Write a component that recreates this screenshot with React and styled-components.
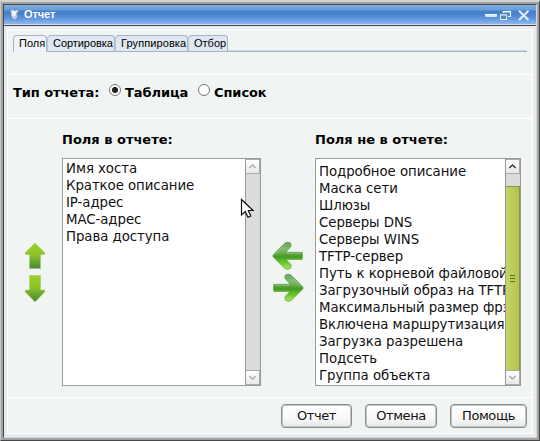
import React from "react";
import styled, { createGlobalStyle } from "styled-components";

const Global = createGlobalStyle`
  * { box-sizing: border-box; }
  body { margin: 0; overflow: hidden; background: #f0f4f3; font: 13.33px/17px "DejaVu Sans", sans-serif; color: #111; }
`;

const Frame = styled.div`
  width: 540px; height: 441px;
  border-style: solid; border-width: 2px 1px 1px;
  border-color: #d2d4d3 #484848 #484848 #c8cbca;
`;
const Bevel = styled.div`
  height: 100%;
  border: 2px solid #a0a3a2;
`;
const Inner = styled.div`
  height: 100%;
  display: flex; flex-direction: column;
  border-style: solid; border-width: 1px;
  border-color: #484848 #d8dbdc #d8dbdc #484848;
  background: #e7ebf1;
`;
const TitleBar = styled.header`
  flex: none; height: 21px; padding: 0 5px 2px;
  display: flex; align-items: center;
  border-bottom: 1px solid #484848;
  box-shadow: inset 0 -1px #d9dee6;
  background: linear-gradient(#7eafe4 0, #6a9dd9 5px, #4580ca 6px, #4882cd 9px, #6399df 14px, #8cb8f0 19px);
`;
const Title = styled.h1`
  flex: 1; margin: 1px 0 0 4px;
  font: bold 11px/17px "Liberation Sans", sans-serif; letter-spacing: -0.1px; color: #fff;
`;
const Controls = styled.div`
  display: flex; align-items: center; margin: 2px 0 0;
`;
const Panel = styled.main`
  flex: 1; margin: 3px; display: flex; flex-direction: column;
  border: 1px solid #fff; background: #f0f4f3;
`;
const TabArea = styled.section`
  flex: none; height: 45px; padding: 5px 5px 0; border-bottom: 1px solid #fff;
`;
const Tabs = styled.nav`
  display: flex; height: 17px;
  font: 11px/15px "Liberation Sans", sans-serif; color: #000;
`;
const Tab = styled.div`
  width: ${(p) => p.$width}px; padding-left: 5px; white-space: nowrap;
  border: 1px solid #a4b2ca; border-left-color: ${(p) => (p.$active ? "#a4b2ca" : "#bdc8da")};
  border-bottom: ${(p) => (p.$active ? "0" : "1px solid #a4b2ca")};
  border-radius: 4px 4px 0 0;
  background: ${(p) => (p.$active ? "#f0f4f9" : "#dfe7ef")};
  letter-spacing: ${(p) => p.$spacing || 0}px;
`;
const TabLine = styled.div`
  flex: 1; border-bottom: 1px solid #a4b2ca; box-shadow: inset 0 -1px #cfdae8;
`;
const TypeRow = styled.section`
  flex: none; height: 44px; padding: 0 5px 9px; display: flex; align-items: center;
  border-bottom: 1px solid #fff; font-size: 13px; font-weight: bold; color: #000;
`;
const TypeLabel = styled.span`width: 96px; padding-top: 1px; white-space: nowrap; letter-spacing: -0.08px;`;
const Choice = styled.label`
  width: 89px; display: flex; align-items: center; gap: 4px; letter-spacing: -0.08px;
  span { padding-top: 1px; }
`;
const Radio = styled.i`
  width: 12px; height: 12px; margin-top: -5px; flex: none; border-radius: 50%;
  border: 1px solid #777;
  background: ${(p) => (p.$checked ? "radial-gradient(circle, #222 0 2.7px, #fff 3.4px)" : "#fff")};
`;
const Fields = styled.section`
  flex: none; height: 279px; padding-top: 12px; display: grid;
  grid-template-columns: 54px 199px 54px 206px; align-items: start;
  border-bottom: 1px solid #fff;
`;
const Column = styled.div``;
const Heading = styled.h2`
  margin: 0; height: 27px; font-size: 13px; line-height: 17px; font-weight: bold; color: #000; white-space: nowrap;
`;
const ListBox = styled.div`
  display: flex; height: 228px; border: 1px solid #999;
  background: #fff;
`;
const Items = styled.ul`
  flex: 1; min-width: 0; overflow: hidden; margin: 0; padding: ${(p) => p.$top}px 0 0 3px; list-style: none;
  letter-spacing: -0.06px;
  li { height: 17px; white-space: nowrap; }
`;
const Scrollbar = styled.div`
  flex: none; width: 15px; display: flex; flex-direction: column;
  border-left: 1px solid #999; background: #dcdcdc;
`;
const ScrollButton = styled.div`
  height: 15px; display: flex; align-items: center; justify-content: center;
  border: 1px solid #aaa; border-left: 0; background: linear-gradient(#fff, #e8e8e8);
`;
const Track = styled.div`flex: 1; padding-top: 12px;`;
const Thumb = styled.div`
  height: 100%; display: flex; align-items: center; justify-content: center;
  border: 1px solid #87983a; border-width: 1px 1px 0 0;
  background: linear-gradient(90deg, #c5d468, #bccc5b 50%, #b2c34f);
`;
const Arrows = styled.div`
  padding-top: ${(p) => p.$top}px; display: flex; flex-direction: column; align-items: center; gap: ${(p) => p.$gap}px;
  svg { display: block; }
`;
const Actions = styled.footer`
  flex: 1; display: flex; justify-content: flex-end; gap: 13px; padding: 6px 5px 0 0;
`;
const Button = styled.button`
  width: ${(p) => p.$width}px; height: 24px; padding: 0;
  border: 1px solid #898c8c; border-radius: 4px;
  box-shadow: inset 0 0 0 1px #c4c6c6;
  background: linear-gradient(#fff, #fafafa 50%, #e9e9e9);
  font: 13px/20px "DejaVu Sans", sans-serif; letter-spacing: -0.4px; color: #111;
`;
const Pointer = styled.svg`position: absolute; left: 240px; top: 198px;`;

const Chevron = ({ down, color }) => (
  <svg width="9" height="7" viewBox="0 0 9 7">
    <path d={down ? "M1.3 2 4.5 5 7.7 2" : "M1.3 5 4.5 2 7.7 5"} fill="none" stroke={color} strokeWidth="1.4" />
  </svg>
);

const VerticalArrow = ({ down }) => (
  <svg width="22" height={down ? 27 : 26} viewBox="0 0 22 26" preserveAspectRatio="none">
    <defs>
      <linearGradient id={down ? "down" : "up"} x2="0" y2="1">
        <stop stopColor="#9fce24" /><stop offset=".45" stopColor="#8cc326" /><stop offset="1" stopColor="#458936" />
      </linearGradient>
    </defs>
    <path
      d={down ? "M5.5 .5H16.5V14.5H20.5L21 16 11.5 25.5H10.5L1 16 1.5 14.5H5.5Z" : "M10.5 .5H11.5L21 10 20.5 11.5H16.5V25.5H5.5V11.5H1.5L1 10Z"}
      fill={`url(#${down ? "down" : "up"})`} stroke="#9cc963" strokeWidth=".5"
    />
  </svg>
);

const SideArrow = ({ right }) => {
  const id = right ? "right" : "left";
  return (
    <svg width="32" height="30" viewBox="0 0 32 30">
      <defs>
        <linearGradient id={id} gradientUnits="userSpaceOnUse" x1="0" y1="1" x2="0" y2="28">
          <stop stopColor="#5c9f4e" /><stop offset=".25" stopColor="#83bb70" /><stop offset=".42" stopColor="#67ab4c" />
          <stop offset=".54" stopColor="#439b25" /><stop offset=".75" stopColor="#68c325" /><stop offset="1" stopColor="#a3eb55" />
        </linearGradient>
      </defs>
      <g transform={right ? "translate(32 0) scale(-1 1)" : undefined}>
        <path d="M1.4 13.6 12.6 2.3Q15.5.2 18.3 1.8 20.2 3.6 18.5 6L13.8 11.3H29.2Q30.5 11.3 30.5 12.6V17.2Q30.5 18.5 29.2 18.5H14L18.6 23.2Q20.1 25.5 18.2 27.5 15.3 29.4 12.6 27.2L1.4 16.2Q.2 14.9 1.4 13.6Z" fill={`url(#${id})`} stroke="#609f43" strokeWidth=".7" />
        <path d="M3 14 13.6 3.4Q15.5 2 17 2.8M15 12.3H29" fill="none" stroke="#b4d99f" strokeWidth=".6" opacity=".6" />
      </g>
    </svg>
  );
};

const ScrollRail = ({ active }) => (
  <Scrollbar>
    <ScrollButton><Chevron color={active ? "#333" : "#aaa"} /></ScrollButton>
    <Track>
      {active && (
        <Thumb>
          <svg width="5" height="8"><path d="M0 .5H5M0 3.5H5M0 6.5H5" stroke="#5c692b" /></svg>
        </Thumb>
      )}
    </Track>
    <ScrollButton><Chevron down color="#aaa" /></ScrollButton>
  </Scrollbar>
);

const included = ["Имя хоста", "Краткое описание", "IP-адрес", "MAC-адрес", "Права доступа"];
const excluded = [
  "Подробное описание", "Маска сети", "Шлюзы", "Серверы DNS", "Серверы WINS", "TFTP-сервер",
  "Путь к корневой файловой", "Загрузочный образ на TFTP", "Максимальный размер фрэ",
  "Включена маршрутизация", "Загрузка разрешена", "Подсеть", "Группа объекта",
];

const FieldList = ({ title, items, top, scrollable }) => (
  <Column>
    <Heading>{title}</Heading>
    <ListBox>
      <Items $top={top}>{items.map((item) => <li key={item}>{item}</li>)}</Items>
      <ScrollRail active={scrollable} />
    </ListBox>
  </Column>
);

export default function App() {
  return (
    <>
      <Global />
      <Frame><Bevel><Inner>
        <TitleBar>
          <svg width="11" height="13" viewBox="0 0 11 13">
            <path d="M1.2 6 3 11Q5.5 13 8 11L9.8 6Z" fill="#b5cbe4" stroke="#416a9d" strokeWidth=".6" />
            <ellipse cx="5.5" cy="4.3" rx="5" ry="3.6" fill="#54789f" />
            <path d="M1 4Q2 1 5 1.2L4 4.5ZM6 1.3Q9 1.4 10 4L7 5Z" fill="#bed3ea" />
            <circle cx="5" cy="5.5" r="2.7" fill="#eaf2fa" />
          </svg>
          <Title>Отчет</Title>
          <Controls>
            <svg width="46" height="15" viewBox="0 0 46 15">
              <rect x="0" y="6" width="12" height="3" rx="1" fill="#d5e5fa" />
              <path d="M0 6.5H12" stroke="#f4f9ff" />
              <path d="M18.5 5V3.5H25.5V8.5H23" fill="none" stroke="#e5f0fc" strokeWidth="1.2" />
              <path d="M18.5 3.7H25.5M15.5 7.2H21.5" stroke="#f6faff" strokeWidth="1.6" />
              <rect x="15.5" y="7" width="6" height="4.5" fill="#5588bd" stroke="#e5f0fc" />
              <path d="M34 2.8 43.5 12M43.5 2.8 34 12" stroke="#e6f0fd" strokeWidth="1.9" />
            </svg>
          </Controls>
        </TitleBar>
        <Panel>
          <TabArea>
            <Tabs>
              <Tab $width={34} $active>Поля</Tab>
              <Tab $width={68} $spacing={-0.05}>Сортировка</Tab>
              <Tab $width={73} $spacing={0.1}>Группировка</Tab>
              <Tab $width={40}>Отбор</Tab>
              <TabLine />
            </Tabs>
          </TabArea>
          <TypeRow>
            <TypeLabel>Тип отчета:</TypeLabel>
            <Choice><Radio $checked /><span>Таблица</span></Choice>
            <Choice><Radio /><span>Список</span></Choice>
          </TypeRow>
          <Fields>
            <Arrows $top={112} $gap={6}><VerticalArrow /><VerticalArrow down /></Arrows>
            <FieldList title="Поля в отчете:" items={included} top={1} />
            <Arrows $top={110} $gap={2}><SideArrow /><SideArrow right /></Arrows>
            <FieldList title="Поля не в отчете:" items={excluded} top={4} scrollable />
          </Fields>
          <Actions>
            <Button $width={71}>Отчет</Button>
            <Button $width={72}>Отмена</Button>
            <Button $width={77}>Помощь</Button>
          </Actions>
        </Panel>
      </Inner></Bevel></Frame>
      <Pointer width="15" height="21" viewBox="0 0 15 21">
        <path d="M1.5 1.5V17L5.3 13.5 8 19.2 10.8 18 8.3 12.5H13Z" fill="#fff" stroke="#111" strokeWidth="1.2" />
      </Pointer>
    </>
  );
}
